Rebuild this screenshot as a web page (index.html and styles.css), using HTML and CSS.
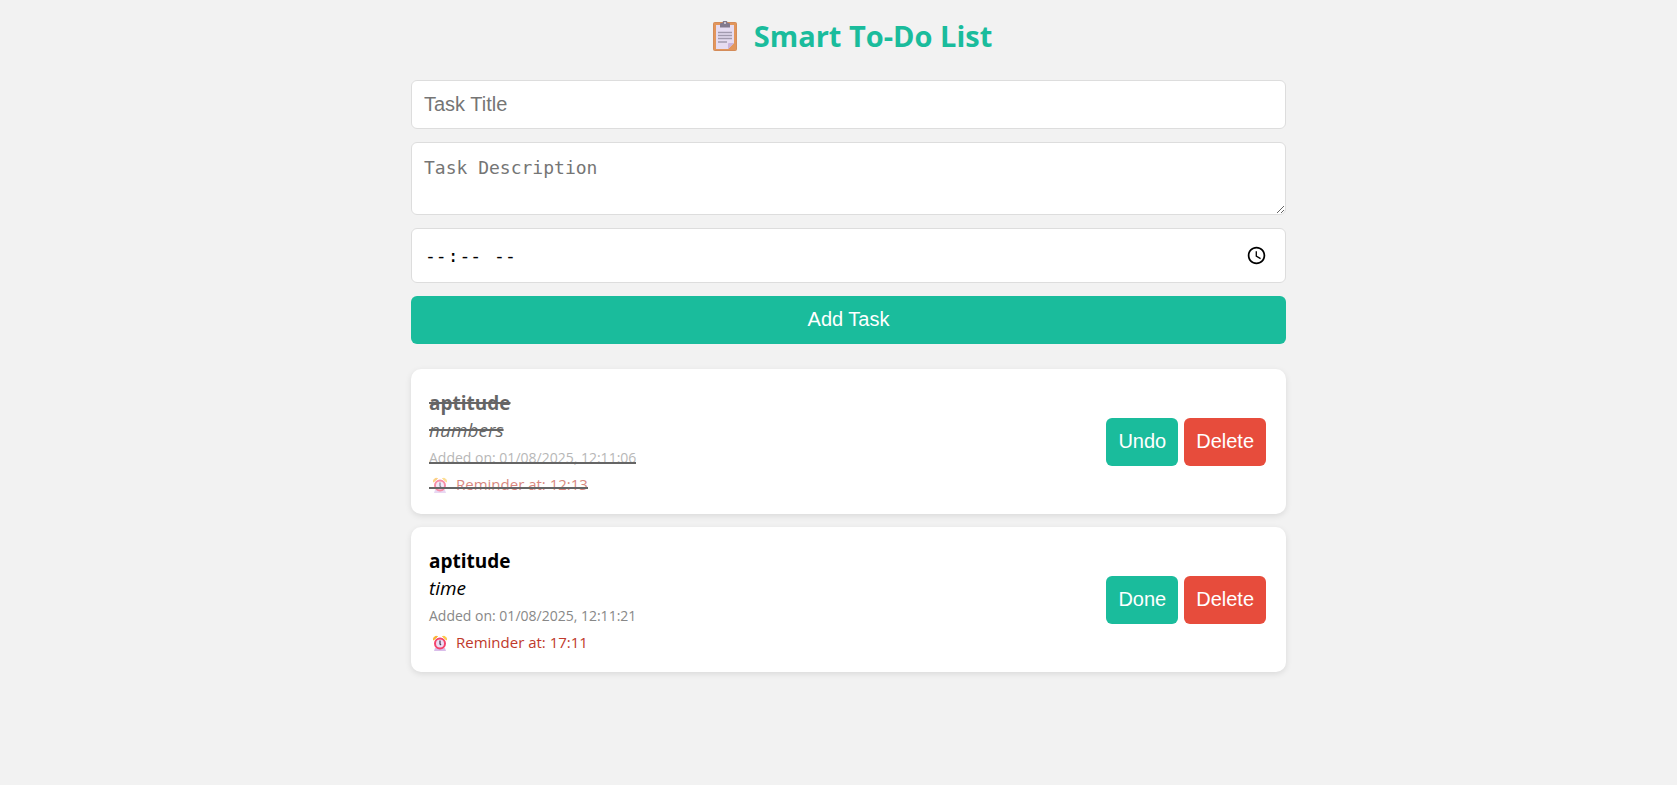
FILE: index.html
```html
<!DOCTYPE html>
<html lang="en">
<head>
<meta charset="utf-8">
<meta name="viewport" content="width=device-width, initial-scale=1">
<title>Smart To-Do List</title>
<link rel="stylesheet" href="styles.css">
</head>
<body>
<svg class="defs" width="0" height="0" aria-hidden="true">
  <symbol id="clock" viewBox="0 0 16 16">
    <path d="M1.500 5A3 3 0 0 1 5.500 1.500Z" fill="#f9b233" stroke="#f9b233"/>
    <path d="M14.500 5A3 3 0 0 0 10.500 1.500Z" fill="#fcc84a" stroke="#fcc84a"/>
    <path d="M2 16l1-3h10l1 3z" fill="#d9bdea"/>
    <circle cx="8" cy="8.500" r="5" fill="#ecdcf5" stroke="#f4436c" stroke-width="2"/>
    <path d="M8 5.500V9l1 1" fill="none" stroke="#50405c" stroke-width="1.300"/>
  </symbol>
</svg>
<main class="container">
  <h1 class="title">
    <svg class="clipboard" viewBox="0 0 24 30" aria-hidden="true">
      <rect x="0.500" y="1.500" width="23" height="28" rx="1" fill="#e2965c" stroke="#d48c5a"/>
      <path d="M3 4h18v18l-6 6H3z" fill="#e6dcf1"/>
      <path d="M15 28v-5q0-1 1-1h5z" fill="#c9b4dc"/>
      <path d="M5 11.500h14M5 14.500h14M5 17.500h14M5 21h9" stroke="#a29aae" stroke-width="1.400"/>
      <path d="M7 6.500V3q0-1 1-1h1.500a2.500 2.500 0 0 1 5 0H16q1 0 1 1v3.500z" fill="#83798d"/>
      <circle cx="12" cy="2" r="1" fill="#e2dce6"/>
    </svg>
    Smart To-Do List
  </h1>
  <form class="form">
    <input class="field" type="text" placeholder="Task Title" aria-label="Task Title">
    <textarea class="field description" placeholder="Task Description" aria-label="Task Description"></textarea>
    <input class="field time" type="time" aria-label="Reminder time">
    <button class="button" type="button">Add Task</button>
  </form>
  <ul class="tasks">
    <li class="task">
      <div class="info completed">
        <strong class="name">aptitude</strong>
        <em class="text">numbers</em>
        <small class="added">Added on: 01/08/2025, 12:11:06</small>
        <small class="reminder"><svg class="clock" aria-hidden="true"><use href="#clock"/></svg>Reminder at: 12:13</small>
      </div>
      <div class="actions">
        <button class="button" type="button">Undo</button>
        <button class="button delete" type="button">Delete</button>
      </div>
    </li>
    <li class="task">
      <div class="info">
        <strong class="name">aptitude</strong>
        <em class="text">time</em>
        <small class="added">Added on: 01/08/2025, 12:11:21</small>
        <small class="reminder"><svg class="clock" aria-hidden="true"><use href="#clock"/></svg>Reminder at: 17:11</small>
      </div>
      <div class="actions">
        <button class="button" type="button">Done</button>
        <button class="button delete" type="button">Delete</button>
      </div>
    </li>
  </ul>
</main>
</body>
</html>
```
FILE: styles.css
```css
* {
  box-sizing: border-box;
}

body {
  margin: 0;
  padding: 16px 20px 16px 40px;
  background: #f2f2f2;
  color: #000;
  font-family: "Segoe UI", "Open Sans", "Noto Sans", sans-serif;
  font-size: 19px;
}

.defs {
  position: absolute;
}

.container {
  max-width: 875px;
  margin: 0 auto;
}

.title {
  display: flex;
  justify-content: center;
  align-items: center;
  gap: 17px;
  margin: 0 0 24px;
  padding-left: 8px;
  color: #1abc9c;
  font-size: 29px;
  line-height: 40px;
}

.clipboard {
  width: 24px;
  height: 30px;
}

.form {
  display: flex;
  flex-direction: column;
  gap: 13px;
}

.field {
  width: 100%;
  min-height: 49px;
  padding: 12px;
  border: 1px solid #ddd;
  border-radius: 6px;
  background: #fff;
  color: #000;
  font-family: "Liberation Sans", Arial, sans-serif;
  font-size: 20px;
}

.field::placeholder {
  color: #757575;
}

.description {
  height: 73px;
  padding-top: 14px;
  font-family: "DejaVu Sans Mono", monospace;
  font-size: 18px;
  resize: vertical;
}

.time {
  height: 55px;
  padding-right: 16px;
  font-family: "DejaVu Sans Mono", monospace;
  font-size: 18px;
}

.time::-webkit-calendar-picker-indicator {
  width: 21px;
  height: 21px;
  padding: 2px;
}

.button {
  padding: 12px 12px 14px;
  border: 0;
  border-radius: 6px;
  background: #1abc9c;
  color: #fff;
  font-family: "Liberation Sans", Arial, sans-serif;
  font-size: 20px;
  line-height: 22px;
  cursor: pointer;
}

.delete {
  background: #e74c3c;
}

.tasks {
  display: flex;
  flex-direction: column;
  gap: 13px;
  margin: 25px 0 0;
  padding: 0;
  list-style: none;
}

.task {
  display: flex;
  justify-content: space-between;
  align-items: center;
  padding: 16px 20px 16px 18px;
  border-radius: 10px;
  background: #fff;
  box-shadow: 0 2px 6px rgba(0, 0, 0, 0.1);
}

.info {
  display: flex;
  flex-direction: column;
  align-items: flex-start;
  padding-top: 5px;
  line-height: 27px;
}

.added,
.reminder {
  position: relative;
}

.added {
  color: #888;
  font-size: 14px;
}

.reminder {
  display: flex;
  align-items: center;
  gap: 8px;
  padding-left: 3px;
  color: #c0392b;
  font-size: 15px;
}

.clock {
  width: 16px;
  height: 16px;
}

.completed {
  opacity: 0.6;
}

.completed .name,
.completed .text {
  text-decoration: line-through 2px;
}

.completed .added::after,
.completed .reminder::after {
  content: "";
  position: absolute;
  left: 0;
  right: 0;
  top: 18px;
  height: 2px;
  background: #000;
}

.completed .reminder::after {
  top: 16px;
}

.actions {
  display: flex;
  gap: 6px;
}
```
